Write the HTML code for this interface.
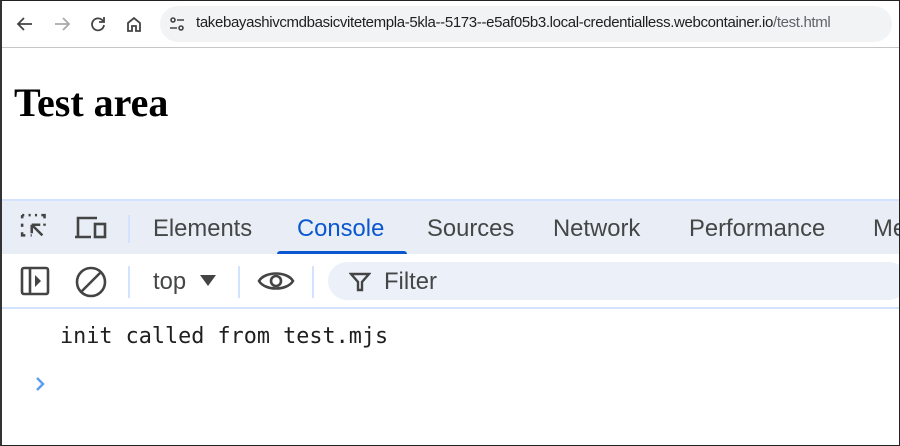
<!DOCTYPE html>
<html><head><style>
*{margin:0;padding:0;box-sizing:border-box}
body{width:900px;height:446px;overflow:hidden;background:#fff;position:relative;font-family:"Liberation Sans",sans-serif}
.frame{position:absolute;inset:0;border:1px solid #222;border-left:2px solid #333;z-index:10;pointer-events:none}
.toolbar{position:absolute;left:0;top:0;width:900px;height:48px;background:#fff;border-bottom:1px solid #c7c7c7}
.omni{position:absolute;left:160px;top:6px;width:732px;height:36px;border-radius:18px;background:#f1f3f4}
.url{position:absolute;left:196px;top:14px;font-size:15px;color:#1f1f1f;white-space:nowrap;letter-spacing:-0.35px}
.url span{color:#5f6368}
h1{position:absolute;left:14px;top:79px;font-family:"Liberation Serif",serif;font-size:40px;font-weight:bold;color:#000}
.tabs{position:absolute;left:0;top:199px;width:900px;height:55px;background:#e9eef6;border-top:2px solid #d3e3fd}
.tab{position:absolute;top:14px;font-size:23.8px;color:#444746;white-space:nowrap}
.ul{position:absolute;left:277px;top:50px;width:130px;height:4px;background:#0b57d0;border-radius:3px 3px 0 0}
.bar2{position:absolute;left:0;top:254px;width:900px;height:55px;background:#fff;border-bottom:2px solid #d3e3fd}
.filter{position:absolute;left:328px;top:8px;width:580px;height:38px;border-radius:19px;background:#ecf1f9}
.sep{position:absolute;width:2px;background:#d3e3fd}
.mono{position:absolute;left:60px;top:324px;font-family:"DejaVu Sans Mono","Liberation Mono",monospace;font-size:21.8px;color:#1f1f1f}
</style></head><body>
<div class="toolbar">
<svg style="position:absolute;left:15px;top:14px" width="20" height="20" viewBox="0 0 20 20" fill="none" stroke="#444" stroke-width="1.8"><path d="M17 10H4M9 4l-6 6 6 6"/></svg>
<svg style="position:absolute;left:52px;top:14px" width="20" height="20" viewBox="0 0 20 20" fill="none" stroke="#aaa" stroke-width="1.8"><path d="M3 10h13M11 4l6 6-6 6"/></svg>
<svg style="position:absolute;left:88px;top:14px" width="20" height="20" viewBox="0 0 20 20" fill="none" stroke="#444" stroke-width="1.8"><path d="M15 7A6 6 0 1 0 16 11"/><path d="M16 3v5h-5" /></svg>
<svg style="position:absolute;left:124px;top:14px" width="20" height="20" viewBox="0 0 20 20" fill="none" stroke="#444" stroke-width="1.8"><path d="M4 9l6-5 6 5v8H12v-5H8v5H4z"/></svg>
<div class="omni"></div>
<svg style="position:absolute;left:168px;top:15px" width="18" height="18" viewBox="0 0 18 18" fill="none" stroke="#444" stroke-width="1.6"><circle cx="5" cy="5" r="2"/><path d="M9 5h7M2 13h7"/><circle cx="13" cy="13" r="2"/></svg>
<div class="url">takebayashivcmdbasicvitetempla-5kla--5173--e5af05b3.local-credentialless.webcontainer.io<span>/test.html</span></div>
</div>
<h1>Test area</h1>
<div class="tabs">
<svg style="position:absolute;left:20px;top:12px" width="32" height="32" viewBox="0 0 30 30" fill="none" stroke="#444" stroke-width="2.4"><path d="M2 2h2M8 2h2M14 2h2M20 2h3v3M2 2v3M2 10v3M2 18v3h3M10 21h1M23 10v2" /><path d="M11 11l10 10M11 11h8M11 11v8"/></svg>
<svg style="position:absolute;left:74px;top:14px" width="34" height="26" viewBox="0 0 34 26" fill="none" stroke="#444" stroke-width="2.6"><path d="M4 22V3h19M1 22h16"/><rect x="21" y="9" width="10" height="13"/></svg>
<div class="sep" style="left:128px;top:14px;height:28px"></div>
<div class="tab" style="left:153px">Elements</div>
<div class="tab" style="left:297px;color:#0b57d0">Console</div>
<div class="tab" style="left:427px">Sources</div>
<div class="tab" style="left:553px">Network</div>
<div class="tab" style="left:689px">Performance</div>
<div class="tab" style="left:873px">Me</div>
<div class="ul"></div>
</div>
<div class="bar2">
<svg style="position:absolute;left:20px;top:12px" width="30" height="30" viewBox="0 0 30 30" fill="none" stroke="#444" stroke-width="2.6"><rect x="2" y="2" width="26" height="26" rx="2"/><path d="M10 2v26"/><path d="M15 9l6 6-6 6z" fill="#444" stroke="none"/></svg>
<svg style="position:absolute;left:75px;top:12px" width="32" height="32" viewBox="0 0 32 32" fill="none" stroke="#444" stroke-width="2.6"><circle cx="16" cy="16" r="14"/><path d="M6 26L26 6"/></svg>
<div class="sep" style="left:128px;top:12px;height:32px"></div>
<div class="tab" style="left:153px;top:14px">top</div>
<svg style="position:absolute;left:200px;top:21px" width="16" height="12" viewBox="0 0 16 12"><path d="M0 0h16L8 11z" fill="#444"/></svg>
<div class="sep" style="left:238px;top:12px;height:32px"></div>
<svg style="position:absolute;left:257px;top:14px" width="38" height="26" viewBox="0 0 38 26" fill="none" stroke="#444" stroke-width="2.6"><path d="M2 13C8 3 30 3 36 13C30 23 8 23 2 13z"/><circle cx="19" cy="13" r="5"/></svg>
<div class="sep" style="left:312px;top:12px;height:32px"></div>
<div class="filter"></div>
<svg style="position:absolute;left:349px;top:17px" width="22" height="22" viewBox="0 0 22 22" fill="none" stroke="#444" stroke-width="2.4"><path d="M2 3h18l-7 8v8h-4v-8z"/></svg>
<div class="tab" style="left:384px;top:14px">Filter</div>
</div>
<div class="mono">init called from test.mjs</div>
<svg style="position:absolute;left:34px;top:376px" width="12" height="16" viewBox="0 0 12 16" fill="none" stroke="#5b9cf0" stroke-width="2.4"><path d="M3 2l6 6-6 6"/></svg>
<div class="frame"></div>
</body></html>
